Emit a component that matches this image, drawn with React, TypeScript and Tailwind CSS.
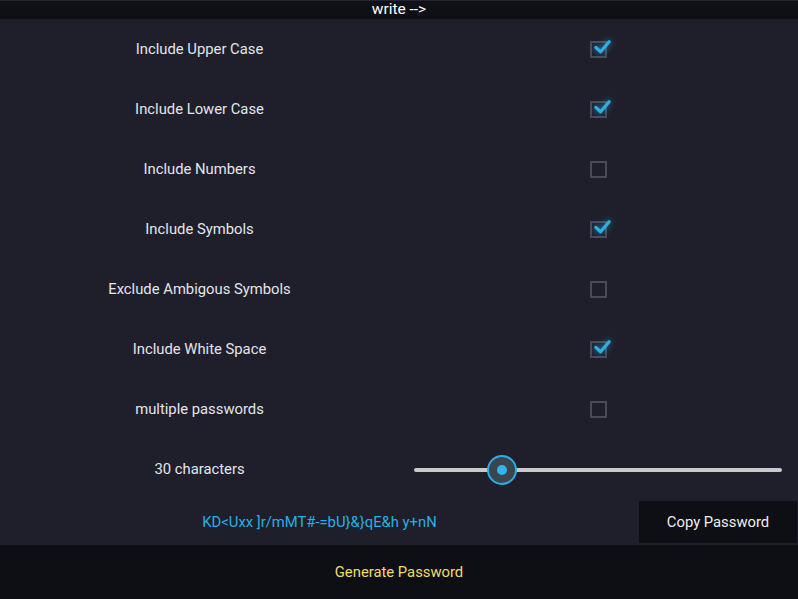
import { useState } from "react";

const options = [
  { label: "Include Upper Case", checked: true },
  { label: "Include Lower Case", checked: true },
  { label: "Include Numbers", checked: false },
  { label: "Include Symbols", checked: true },
  { label: "Exclude Ambigous Symbols", checked: false },
  { label: "Include White Space", checked: true },
  { label: "multiple passwords", checked: false },
];

const password = "KD<Uxx ]r/mMT#-=bU}&}qE&h y+nN";

function CheckBox({ checked, onToggle }: { checked: boolean; onToggle: () => void }) {
  return (
    <button onClick={onToggle} className="relative h-[17px] w-[17px] border-2 border-[#4a4a55] bg-transparent">
      {checked && (
        <svg
          viewBox="0 0 20 20"
          className="absolute left-[1px] top-[-6px] h-[19px] w-[19px] drop-shadow-[0_0_3px_rgba(41,171,226,0.8)]"
        >
          <path d="M3 11 L8 15.5 L17 5" fill="none" stroke="#2eaee3" strokeWidth="3.4" strokeLinecap="round" strokeLinejoin="round" />
        </svg>
      )}
    </button>
  );
}

export default function App() {
  const [opts, setOpts] = useState(options.map((o) => o.checked));
  const length = 30;
  const pct = 24;

  return (
    <div className="flex h-[599px] w-[798px] flex-col bg-[#1f1f2c] font-['Roboto',sans-serif] text-[14.8px] text-[#e4e4ea]">
      <div className="flex h-[19px] items-center justify-center border-t border-[#25252f] bg-[#0f1016] text-[15.5px] leading-none text-white">
        write --&gt;
      </div>

      {options.map((o, i) => (
        <div key={o.label} className="grid h-[60px] grid-cols-2 items-center">
          <div className="text-center">{o.label}</div>
          <div className="flex justify-center">
            <CheckBox
              checked={opts[i]}
              onToggle={() => setOpts(opts.map((v, j) => (j === i ? !v : v)))}
            />
          </div>
        </div>
      ))}

      <div className="grid h-[60px] grid-cols-2 items-center">
        <div className="text-center">{length} characters</div>
        <div className="relative mr-4 ml-[15px] mt-[2px] h-[4px] rounded-sm bg-[#c9c9cc]">
          <div
            className="absolute top-1/2 flex h-[30px] w-[30px] -translate-x-1/2 -translate-y-1/2 items-center justify-center rounded-full border-2 border-[#2aaee3] bg-[#3a4550]"
            style={{ left: `${pct}%` }}
          >
            <div className="h-[10px] w-[10px] rounded-full bg-[#2eb6ee]" />
          </div>
        </div>
      </div>

      <div className="flex h-[46px] items-center">
        <div className="flex-1 text-center text-[#2aaee3]">{password}</div>
        <button className="mr-[1px] h-[42px] w-[158px] bg-[#0e0f14] text-[#eeeeee]">Copy Password</button>
      </div>

      <button className="flex-1 bg-[#0e0f15] text-[#f5da6e]">Generate Password</button>
    </div>
  );
}
